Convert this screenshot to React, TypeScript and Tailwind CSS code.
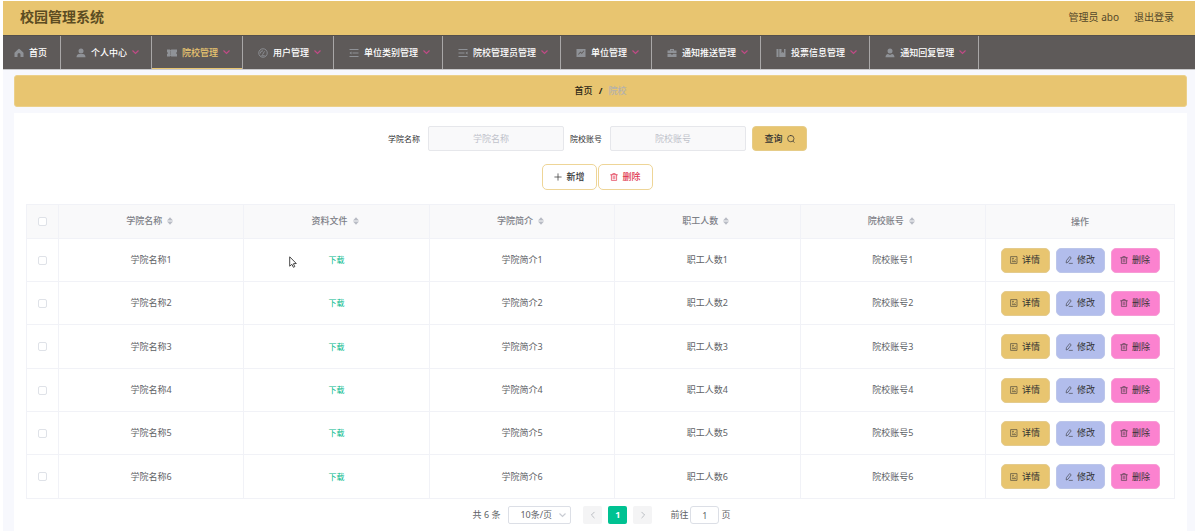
import { ReactNode, useState } from 'react';

type IconName =
  | 'home' | 'user' | 'ticket' | 'meter' | 'unfold' | 'fold'
  | 'trend' | 'case' | 'book' | 'custom';

const navShapes: Record<IconName, ReactNode> = {
  home: <path fill="currentColor" d="M10 1.500Q11 1.500 19 9.500V18H13v-5a3 3 0 0 0-6 0v5H1V9.500Q9 1.500 10 1.500z" />,
  user: (
    <g fill="currentColor">
      <circle cx="10" cy="6" r="5" />
      <path d="M1 18.500c0-4 2-6 5-6.500h8c3 .5 5 2.500 5 6.500z" />
    </g>
  ),
  ticket: (
    <path
      fill="currentColor"
      d="M0 3h6l1.200 1.800L8.400 3H20v4.800a2.300 2.300 0 0 0 0 4.400V17H8.400l-1.200-1.800L6 17H0v-4.800a2.300 2.300 0 0 0 0-4.400zM6.500 7v2h1.500V7zm0 4v2h1.500v-2z"
      fillRule="evenodd"
    />
  ),
  meter: (
    <g fill="none" stroke="currentColor" strokeWidth="1.800">
      <circle cx="10" cy="10" r="8.500" />
      <path d="M9 13.500 13 6.500M4.500 11a5.500 5.500 0 0 1 5.500-5.500M6.500 15.500h7" />
    </g>
  ),
  unfold: (
    <g fill="none" stroke="currentColor" strokeWidth="2.400">
      <path d="M1 3h18M7 10h12M1 17h18" />
      <path fill="currentColor" stroke="none" d="M1 10l4-3v6z" />
    </g>
  ),
  fold: (
    <g fill="none" stroke="currentColor" strokeWidth="2.400">
      <path d="M1 3h18M1 10h12M1 17h18" />
      <path fill="currentColor" stroke="none" d="M15 10l4-3v6z" />
    </g>
  ),
  trend: (
    <path
      fill="currentColor"
      fillRule="evenodd"
      d="M1 2h18v16H1zM4 12.500l1.300 1.200 3.700-4 2.500 2.300 5-5.800-1.400-1.200-3.700 4.300L8.900 7z"
    />
  ),
  case: (
    <g fill="currentColor">
      <path fillRule="evenodd" d="M6 5V2h8v3h5v5H1V5zM8 5h4V3.800H8z" />
      <path d="M1 11.500h7V13h4v-1.500h7V18H1z" />
    </g>
  ),
  book: (
    <g fill="currentColor">
      <path d="M1 2h4v16H1z" />
      <path d="M6.500 2H11v8l2.500-2 2.500 2V2h3v16H6.500z" />
    </g>
  ),
  custom: (
    <g fill="currentColor">
      <circle cx="10" cy="6" r="5" />
      <path d="M1 18.500c0-4 2-6 5-6.500l4 2 4-2c3 .5 5 2.500 5 6.500z" />
    </g>
  ),
};

function NavIcon({ name }: { name: IconName }) {
  return (
    <svg viewBox="0 0 20 20" className="size-2.5 shrink-0 text-[#8f9297]" aria-hidden="true">
      {navShapes[name]}
    </svg>
  );
}

function Line({ d, className }: { d: string; className: string }) {
  return (
    <svg
      viewBox="0 0 20 20"
      className={className}
      fill="none"
      stroke="currentColor"
      strokeWidth="1.800"
      strokeLinecap="round"
      strokeLinejoin="round"
      aria-hidden="true"
    >
      <path d={d} />
    </svg>
  );
}

function Chevron({ className }: { className: string }) {
  return (
    <svg viewBox="0 0 7 7" className={className} fill="none" stroke="currentColor" strokeWidth="1.200" aria-hidden="true">
      <path d="M.5 1.500l3 3 3-3" />
    </svg>
  );
}

const shapes = {
  left: 'M13 3l-7 7 7 7',
  right: 'M7 3l7 7-7 7',
  plus: 'M10 2v16M2 10h16',
  search: 'M9.500 1a8 8 0 1 0 0 16 8 8 0 0 0 0-16zM15 15.500l3 3',
  trash: 'M1.500 4.500h17M7 4V1.500h6V4M3.500 4.500v14h13v-14M8 8.500v6M12 8.500v6',
  document: 'M2.500 1.500h15v17h-15zM6 6h3M6 10h2M6 14h8M12 11l2-2',
  edit: 'M12.500 2l3 2.500-8 11-4.500 2 .5-5zM10.500 18.500h8',
};

const navItems: { label: string; icon: IconName }[] = [
  { label: '个人中心', icon: 'user' },
  { label: '院校管理', icon: 'ticket' },
  { label: '用户管理', icon: 'meter' },
  { label: '单位类别管理', icon: 'unfold' },
  { label: '院校管理员管理', icon: 'fold' },
  { label: '单位管理', icon: 'trend' },
  { label: '通知推送管理', icon: 'case' },
  { label: '投票信息管理', icon: 'book' },
  { label: '通知回复管理', icon: 'custom' },
];

const columns = ['学院名称', '资料文件', '学院简介', '职工人数', '院校账号'];
const rows = [1, 2, 3, 4, 5, 6];

function SortIcon() {
  return (
    <svg viewBox="0 0 6 8" className="h-2 w-1.5" fill="#b8bbc4" aria-hidden="true">
      <path d="M3 .2l3 3.200H0zM3 7.800l3-3.200H0z" />
    </svg>
  );
}

function SearchField({ id, label }: { id: string; label: string }) {
  return (
    <div className="flex items-center gap-2">
      <label htmlFor={id} className="text-[8px] text-[#303133]">{label}</label>
      <input
        id={id}
        placeholder={label}
        className="h-[25px] w-[136px] rounded-xs border border-[#e6e7eb] bg-[#f9f9fa] pr-[10px] text-center text-[9px] text-[#606266] outline-none placeholder:text-[#bfc2ca]"
      />
    </div>
  );
}

function CheckBox({ label }: { label: string }) {
  return (
    <input
      type="checkbox"
      aria-label={label}
      className="mx-auto block size-[9px] appearance-none rounded-[2px] border border-[#dfe2e8] bg-white checked:bg-[#00c292]"
    />
  );
}

function ActionButton({ label, icon, tone }: { label: string; icon: string; tone: string }) {
  return (
    <button
      type="button"
      className={`flex h-[25px] w-[49px] items-center justify-center gap-1 rounded-[5px] border text-[9px] text-[#333] ${tone}`}
    >
      <Line d={icon} className="size-2 opacity-80" />
      {label}
    </button>
  );
}

export default function App() {
  const [page, setPage] = useState('1');
  return (
    <div className="min-h-screen bg-white pt-px pr-[5px] pl-[3px] font-['Noto_Sans','Noto_Sans_CJK_SC',sans-serif] text-[9px] leading-3 text-[#606266]">
      <div className="flex min-h-[530px] flex-col bg-[#f7f8fd]">
        <header className="flex h-[34px] items-center justify-between bg-[#e8c570] pr-[21px] pb-0.5 pl-[17px] text-[#5c4c22]">
          <h1 className="text-[14px] leading-5 font-bold">校园管理系统</h1>
          <div className="flex gap-[15px] text-[10px] text-[#54482a]">
            <span>管理员 abo</span>
            <a href="#logout">退出登录</a>
          </div>
        </header>

        <nav className="flex h-[35px] border-t border-b border-t-[#54504c] border-b-[#c9c9cb] bg-[#5e5a59] font-medium text-white">
          <a href="#home" className="flex w-[58px] items-center gap-[5px] border-r border-[#a9a7a7] pl-[11px]">
            <NavIcon name="home" />
            首页
          </a>
          {navItems.map(({ label, icon }) => {
            const active = label === '院校管理';
            return (
              <a
                key={label}
                href={`#${icon}`}
                aria-current={active ? 'page' : undefined}
                className={`flex items-center border-r border-[#a9a7a7] pr-3 pl-[15px] ${active ? 'text-[#e8c570] shadow-[inset_0_-1px_0_#e8c570]' : ''}`}
              >
                <NavIcon name={icon} />
                <span className="px-[5px]">{label}</span>
                <Chevron className="size-[7px] text-[#c04a86]" />
              </a>
            );
          })}
        </nav>

        <main className="flex grow flex-col gap-1.5 pt-[5px] pr-2 pl-[11px]">
          <div className="flex h-8 items-center justify-center gap-1.5 rounded-[3px] border border-[#ecd08a] bg-[#e8c570] font-medium">
            <a href="#home" className="text-[#2b2614]">首页</a>
            <span className="font-bold text-[#2b2614]">/</span>
            <span className="text-[#b4b1ac]">院校</span>
          </div>

          <section className="grow bg-white px-3 pt-[13px]">
            <form className="flex items-center justify-center gap-1.5 pr-1.5" onSubmit={(e) => e.preventDefault()}>
              <SearchField id="college" label="学院名称" />
              <SearchField id="account" label="院校账号" />
              <button
                type="submit"
                className="flex h-[25px] w-[55px] items-center justify-center gap-1 rounded border border-[#e6cc88] bg-[#e8c570] font-medium text-[#333]"
              >
                查询
                <Line d={shapes.search} className="size-2" />
              </button>
            </form>

            <div className="mt-[13px] flex justify-center gap-px pr-1.5">
              <button type="button" className="flex h-[26px] w-[55px] items-center justify-center gap-1 rounded-[5px] border border-[#eed597] bg-white font-medium text-[#333]">
                <Line d={shapes.plus} className="size-2" />
                新增
              </button>
              <button type="button" className="flex h-[26px] w-[55px] items-center justify-center gap-1 rounded-[5px] border border-[#eed597] bg-white font-medium text-[#e0374f]">
                <Line d={shapes.trash} className="size-2" />
                删除
              </button>
            </div>

            <table className="mt-3.5 w-full table-fixed border-collapse text-center">
              <thead>
                <tr className="h-[34px] bg-[#f9f9fa] text-[#7d8087]">
                  <th className="w-8 border border-[#f1f2f7]"><CheckBox label="全选" /></th>
                  {columns.map((c) => (
                    <th key={c} className="border border-[#f1f2f7] pr-[3px] pb-0.5 font-medium">
                      <span className="flex items-center justify-center gap-[5px]">
                        {c}
                        <SortIcon />
                      </span>
                    </th>
                  ))}
                  <th className="w-[189px] border border-[#f1f2f7] font-medium">操作</th>
                </tr>
              </thead>
              <tbody>
                {rows.map((n) => (
                  <tr key={n} className="h-[43px] nth-[3n]:h-11">
                    <td className="border border-[#f1f2f7]"><CheckBox label={`选择第${n}行`} /></td>
                    {columns.map((c) => (
                      <td key={c} className="border border-[#f1f2f7]">
                        {c === '资料文件' ? (
                          <a href={`#file-${n}`} className="text-[8px] text-[#00b98b]">下载</a>
                        ) : (
                          `${c}${n}`
                        )}
                      </td>
                    ))}
                    <td className="border border-[#f1f2f7]">
                      <div className="flex justify-center gap-1.5">
                        <ActionButton label="详情" icon={shapes.document} tone="border-[#e4cb8d] bg-[#e8c570]" />
                        <ActionButton label="修改" icon={shapes.edit} tone="border-[#bcc6ea] bg-[#b2bdec]" />
                        <ActionButton label="删除" icon={shapes.trash} tone="border-[#f79bd5] bg-[#fb82cf]" />
                      </div>
                    </td>
                  </tr>
                ))}
              </tbody>
            </table>

            <div className="mt-[7px] flex items-center justify-center pl-0.5">
              <span>共 6 条</span>
              <div className="relative ml-2">
                <select aria-label="每页条数" className="block h-[18px] w-[63px] appearance-none rounded-xs border border-[#dcdfe6] bg-white pl-[11px] text-[9px] leading-3">
                  <option>10条/页</option>
                </select>
                <Chevron className="pointer-events-none absolute top-1.5 right-[5px] size-[7px] text-[#c9ccd3]" />
              </div>
              <div className="mx-3 flex gap-1.5">
                <button type="button" aria-label="上一页" disabled className="flex h-[18px] w-[19px] items-center justify-center rounded-xs bg-[#f4f4f5] text-[#a4a8b0]">
                  <Line d={shapes.left} className="size-2" />
                </button>
                <button type="button" aria-current="page" className="h-[18px] w-[19px] rounded-xs bg-[#00c292] font-bold text-white">1</button>
                <button type="button" aria-label="下一页" disabled className="flex h-[18px] w-[19px] items-center justify-center rounded-xs bg-[#f4f4f5] text-[#a4a8b0]">
                  <Line d={shapes.right} className="size-2" />
                </button>
              </div>
              <label className="ml-1.5 flex items-center gap-0.5">
                前往
                <input
                  value={page}
                  onChange={(e) => setPage(e.target.value)}
                  className="h-[18px] w-[29px] rounded-[3px] border border-[#dcdfe6] bg-white text-center text-[9px]"
                />
                页
              </label>
            </div>
          </section>
        </main>
      </div>

      <svg viewBox="0 0 8 12" className="pointer-events-none absolute top-[256px] left-[289px] h-3 w-2" aria-hidden="true">
        <path d="M.7.8v9.400l2.200-1.900 1.500 3 1.400-.7-1.400-2.900 2.900-.2z" fill="#fff" stroke="#333" strokeWidth=".9" />
      </svg>
    </div>
  );
}
